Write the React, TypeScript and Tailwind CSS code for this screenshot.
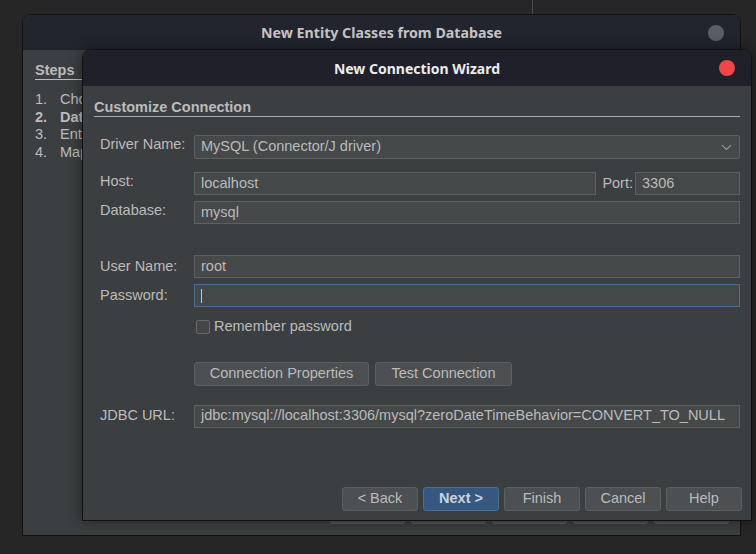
import React from 'react';

const Field = ({ value, className = '', focused = false }: { value?: string; className?: string; focused?: boolean }) => (
  <div
    className={`h-[23px] px-[6px] flex items-center bg-[#45494a] border overflow-hidden whitespace-nowrap ${
      focused ? 'border-[#466d94]' : 'border-[#5e6060]'
    } ${className}`}
  >
    {focused && <span className="w-px h-[14px] bg-[#c8c8c8]" />}
    {value}
  </div>
);

const Btn = ({ label, primary = false, className = '' }: { label?: string; primary?: boolean; className?: string }) => (
  <div
    className={`h-[24px] flex items-center justify-center rounded-[3px] border ${
      primary
        ? 'bg-[#365880] border-[#4c708c] font-bold text-[#c9d3de]'
        : 'bg-[#4c5052] border-[#5e6060] text-[#bbbbbb]'
    } ${className}`}
  >
    {label}
  </div>
);

export default function App() {
  return (
    <div className="relative w-[756px] h-[554px] bg-[#262626] overflow-hidden font-['Liberation_Sans',Arial,sans-serif] text-[14.5px] text-[#bbbbbb]">
      <div className="absolute left-[532px] top-0 w-px h-[14px] bg-[#4a4a4a]" />

      {/* back window */}
      <div className="absolute left-[22px] top-[14px] w-[719px] h-[522px] rounded-t-[9px] border border-[#111] bg-[#3c3f41] flex flex-col overflow-hidden">
        <div className="relative h-[35px] shrink-0 bg-[#23252e] flex items-center justify-center font-['Noto_Sans',sans-serif] font-bold text-[14.2px] text-[#c4c4c4]">
          New Entity Classes from Database
          <span className="absolute right-[16px] top-[10px] w-[16px] h-[16px] rounded-full bg-[#5b5e66]" />
        </div>
        <div className="flex-1 ml-[12px] pt-[11px] w-[47px] overflow-hidden whitespace-nowrap">
          <div className="w-[80px] font-bold leading-[18px] border-b border-[#bbbbbb]">Steps</div>
          <div className="mt-[11px] leading-[17.7px]">
            <div className="flex"><span className="w-[25px] shrink-0">1.</span>Cho</div>
            <div className="flex font-bold"><span className="w-[25px] shrink-0">2.</span>Dat</div>
            <div className="flex"><span className="w-[25px] shrink-0">3.</span>Ent</div>
            <div className="flex"><span className="w-[25px] shrink-0">4.</span>Map</div>
          </div>
        </div>
        {/* button row, hidden behind the wizard except for its lower edge */}
        <div className="flex justify-end gap-[6px] pr-[11px] pb-[11px]">
          {[0, 1, 2, 3, 4].map(i => (
            <Btn key={i} className="w-[75px]" />
          ))}
        </div>
      </div>

      {/* front dialog */}
      <div className="absolute left-[82px] top-[49px] w-[670px] h-[472px] rounded-t-[9px] border border-[#111] bg-[#3c3f41] flex flex-col overflow-hidden shadow-[0_0_14px_rgba(0,0,0,0.45)]">
        <div className="relative h-[36px] shrink-0 bg-[#1f2029] flex items-center justify-center font-['Noto_Sans',sans-serif] font-bold text-[14px] text-[#ececec]">
          New Connection Wizard
          <span className="absolute right-[16px] top-[10px] w-[16px] h-[16px] rounded-full bg-[#ef4747]" />
        </div>

        <div className="flex-1 flex flex-col pl-[11px] pr-[10px]">
          <div className="mt-[12px] mr-[1px] leading-[18px] font-bold border-b border-[#a9a9a9]">Customize Connection</div>

          <div className="pl-[6px] pr-[1px] flex flex-col">
            <div className="flex items-center mt-[18px]">
              <div className="w-[94px] -mt-[4px]">Driver Name:</div>
              <div className="flex-1 h-[24px] px-[6px] flex items-center justify-between bg-[#45494a] border border-[#5e6060] rounded-[2px]">
                MySQL (Connector/J driver)
                <svg width="11" height="7" viewBox="0 0 11 7" className="mr-[1px]">
                  <path d="M1 1.2 L5.5 5.5 L10 1.2" fill="none" stroke="#9a9a9a" strokeWidth="1.1" />
                </svg>
              </div>
            </div>

            <div className="flex items-center mt-[13px]">
              <div className="w-[94px] -mt-[4px]">Host:</div>
              <Field value="localhost" className="flex-1" />
              <div className="ml-[6px] mr-[2px]">Port:</div>
              <Field value="3306" className="w-[105px]" />
            </div>

            <div className="flex items-center mt-[6px]">
              <div className="w-[94px] -mt-[4px]">Database:</div>
              <Field value="mysql" className="flex-1" />
            </div>

            <div className="flex items-center mt-[31px]">
              <div className="w-[94px]">User Name:</div>
              <Field value="root" className="flex-1" />
            </div>

            <div className="flex items-center mt-[6px]">
              <div className="w-[94px]">Password:</div>
              <Field focused className="flex-1" />
            </div>

            <div className="flex items-center mt-[9px] ml-[96px]">
              <span className="w-[14px] h-[14px] rounded-[2px] border border-[#6a6a6a] bg-[#43474a]" />
              <span className="ml-[4px]">Remember password</span>
            </div>

            <div className="flex mt-[24px] ml-[94px] gap-[6px]">
              <Btn label="Connection Properties" className="w-[175px]" />
              <Btn label="Test Connection" className="w-[137px]" />
            </div>

            <div className="flex items-center mt-[19px]">
              <div className="w-[94px]">JDBC URL:</div>
              <Field value="jdbc:mysql://localhost:3306/mysql?zeroDateTimeBehavior=CONVERT_TO_NULL" className="flex-1" />
            </div>
          </div>

          <div className="mt-auto mb-[9px] flex justify-end gap-[5px] -mr-[1px]">
            <Btn label="< Back" className="w-[76px]" />
            <Btn label="Next >" primary className="w-[76px]" />
            <Btn label="Finish" className="w-[76px]" />
            <Btn label="Cancel" className="w-[76px]" />
            <Btn label="Help" className="w-[76px]" />
          </div>
        </div>
      </div>
    </div>
  );
}
